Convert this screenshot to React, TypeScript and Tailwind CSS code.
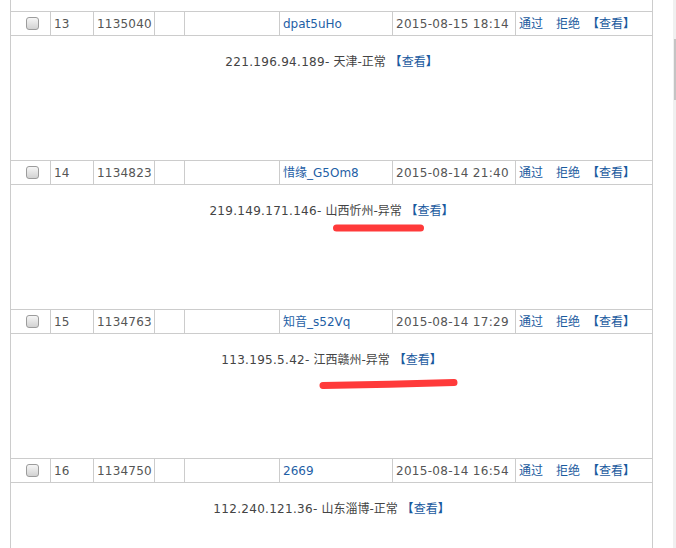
import React from "react";

type Row = {
  no: string;
  id: string;
  name: string;
  date: string;
  ip: string;
  place: string;
};

const rows: Row[] = [
  { no: "13", id: "1135040", name: "dpat5uHo", date: "2015-08-15 18:14", ip: "221.196.94.189-", place: "天津-正常" },
  { no: "14", id: "1134823", name: "惜缘_G5Om8", date: "2015-08-14 21:40", ip: "219.149.171.146-", place: "山西忻州-异常" },
  { no: "15", id: "1134763", name: "知音_s52Vq", date: "2015-08-14 17:29", ip: "113.195.5.42-", place: "江西赣州-异常" },
  { no: "16", id: "1134750", name: "2669", date: "2015-08-14 16:54", ip: "112.240.121.36-", place: "山东淄博-正常" },
];

const font = { fontFamily: '"DejaVu Sans", "Noto Sans CJK SC", sans-serif' };

function Checkbox() {
  return (
    <div className="w-[13px] h-[13px] rounded-[3px] border border-[#9c9c9c] bg-gradient-to-b from-[#f6f6f6] to-[#d2d2d2]" />
  );
}

function View() {
  return (
    <span className="text-[#1a5a9e]">
      <span className="font-bold">【</span>查看<span className="font-bold">】</span>
    </span>
  );
}

function HeaderRow({ r }: { r: Row }) {
  const cell = "h-full border-l border-[#cccccc] flex items-center pl-[3px] shrink-0";
  return (
    <div className="flex h-[24px] border-t border-[#cccccc] text-[12px] text-[#555555]">
      <div className={`${cell} w-[40px] justify-center pl-0`}>
        <Checkbox />
      </div>
      <div className={`${cell} w-[43px]`}>{r.no}</div>
      <div className={`${cell} w-[61px] tracking-[0.2px]`}>{r.id}</div>
      <div className={`${cell} w-[30px]`}></div>
      <div className={`${cell} w-[95px]`}></div>
      <div className={`${cell} w-[113px] text-[#1f5fa6]`}>{r.name}</div>
      <div className={`${cell} w-[123px] tracking-[0.3px]`}>{r.date}</div>
      <div className={`${cell} w-[138px] border-r pl-[1px] text-[#1a5a9e]`}>
        <span>通过</span>
        <span className="ml-[13px]">拒绝</span>
        <span className="ml-[7px]">
          <View />
        </span>
      </div>
    </div>
  );
}

function DetailRow({ r }: { r: Row }) {
  return (
    <div className="h-[125px] border-t border-l border-r border-[#cccccc] text-[12px] text-[#444444] text-center pt-[18px] leading-[16px]">
      <span className="tracking-[0.3px]">{r.ip}</span>
      <span> {r.place} </span>
      <View />
    </div>
  );
}

export default function App() {
  return (
    <div className="relative w-[676px] h-[548px] overflow-hidden bg-white flex" style={font}>
      <div className="w-[673px] pl-[10px]">
        <div className="w-[643px]">
          <div className="h-[11px] border-l border-r border-[#cccccc]" />
          {rows.map((r) => (
            <div key={r.no}>
              <HeaderRow r={r} />
              <DetailRow r={r} />
            </div>
          ))}
        </div>
      </div>
      <div className="w-[3px] h-full bg-[#f0f0f0] flex flex-col">
        <div className="h-[39px]" />
        <div className="h-[61px] ml-[1px] w-[2px] bg-[#c4c4c4]" />
      </div>
      <svg className="absolute left-0 top-0 pointer-events-none" width="676" height="548">
        <path d="M336.5 228 L420.5 228" stroke="#ff3a3a" strokeWidth="7" strokeLinecap="round" fill="none" />
        <path d="M323 385.5 Q390 384.5 454 382.5" stroke="#ff3a3a" strokeWidth="7" strokeLinecap="round" fill="none" />
      </svg>
    </div>
  );
}
